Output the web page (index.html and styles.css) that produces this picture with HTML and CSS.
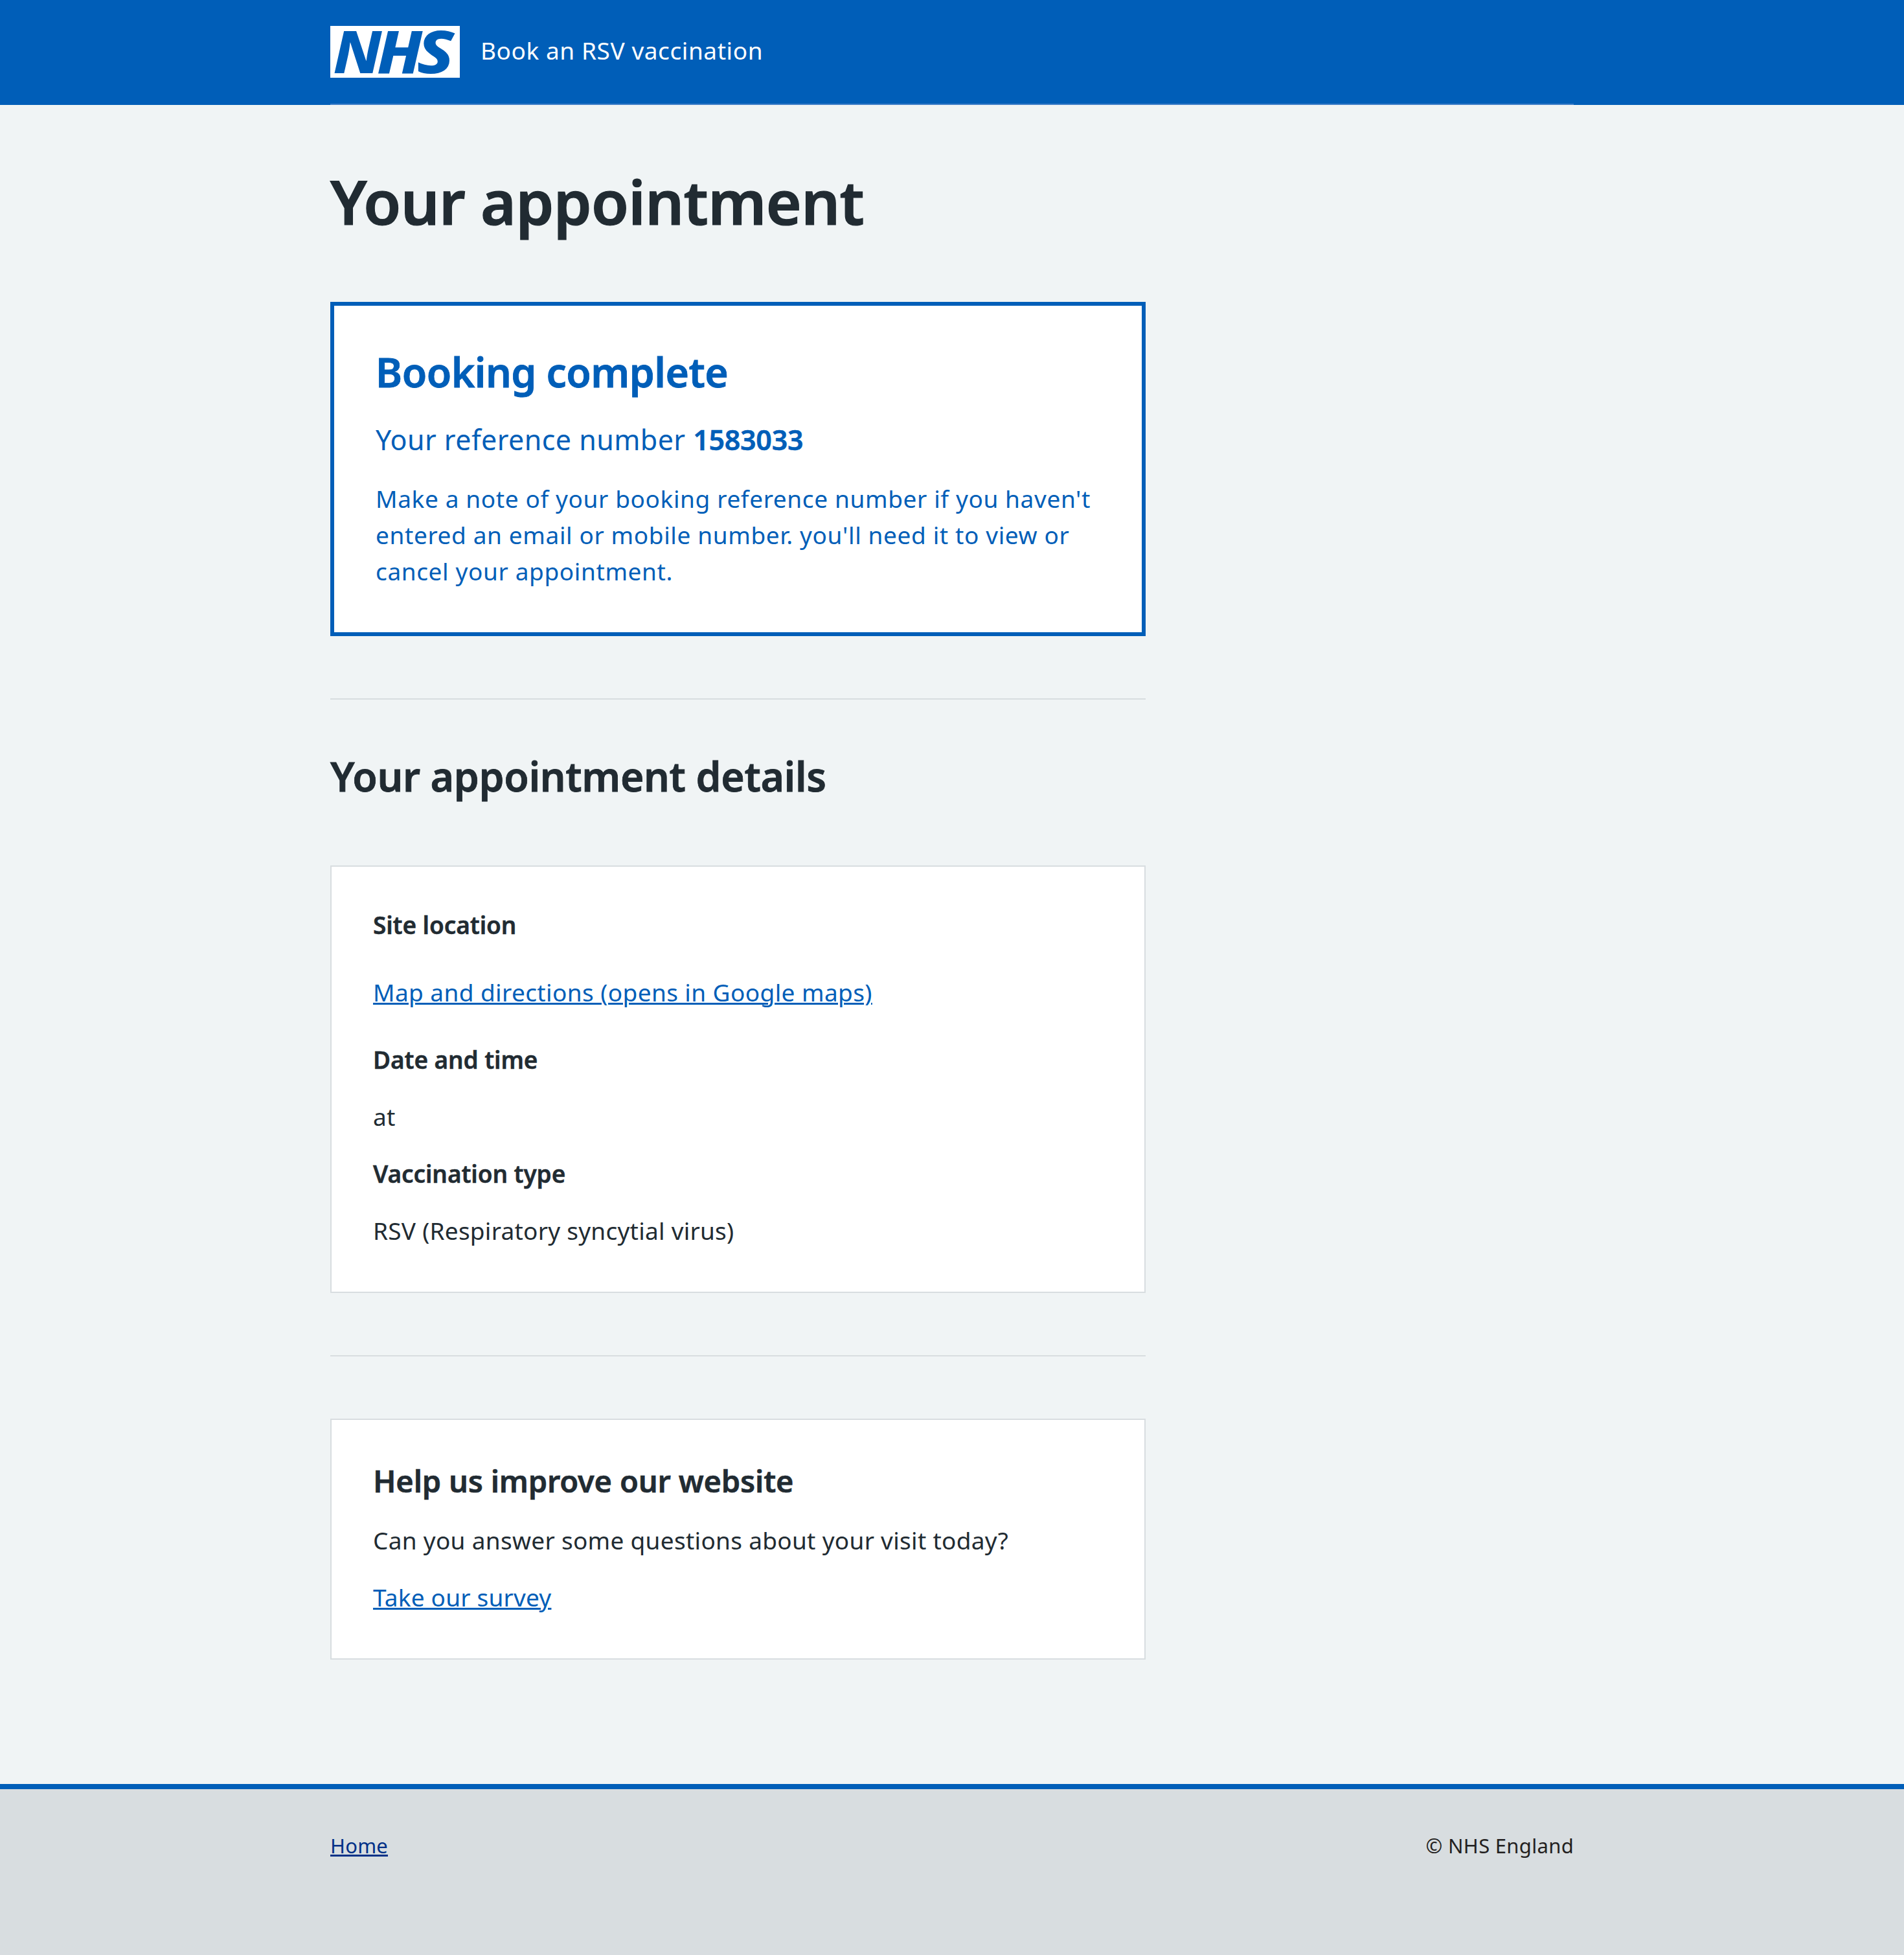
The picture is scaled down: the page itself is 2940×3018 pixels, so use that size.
FILE: index.html
```html
<!DOCTYPE html>
<html lang="en">
<head>
<meta charset="utf-8">
<title>Your appointment - Book an RSV vaccination</title>
<link rel="stylesheet" href="styles.css">
</head>
<body>
<header class="header">
  <div class="container header-inner">
    <svg class="logo" viewBox="0 0 200 80" role="img" aria-label="NHS">
      <rect width="200" height="80" fill="#fff"/>
      <g class="logo-letters">
        <text transform="translate(4.6 72.7) scale(1.06 1)">N</text>
        <text transform="translate(71.9 72.7) scale(1.086 1)">H</text>
        <text transform="translate(133.8 72.7) scale(1.17 1)">S</text>
      </g>
    </svg>
    <span class="service-name">Book an RSV vaccination</span>
  </div>
</header>
<main class="container main">
  <div class="column">
    <h1 class="title">Your appointment</h1>
    <section class="panel">
      <h2 class="panel-title">Booking complete</h2>
      <p class="reference">Your reference number <strong>1583033</strong></p>
      <p class="panel-text">Make a note of your booking reference number if you haven't entered an email or mobile number. you'll need it to view or cancel your appointment.</p>
    </section>
    <hr class="rule">
    <h2 class="subtitle">Your appointment details</h2>
    <section class="card details">
      <h3 class="label">Site location</h3>
      <p class="map"><a class="link" href="#">Map and directions (opens in Google maps)</a></p>
      <h3 class="label">Date and time</h3>
      <p class="value">at</p>
      <h3 class="label">Vaccination type</h3>
      <p class="value">RSV (Respiratory syncytial virus)</p>
    </section>
    <hr class="rule">
    <section class="card survey">
      <h2 class="card-title">Help us improve our website</h2>
      <p class="question">Can you answer some questions about your visit today?</p>
      <p class="survey-link"><a class="link" href="#">Take our survey</a></p>
    </section>
  </div>
</main>
<footer class="footer">
  <div class="container footer-inner">
    <a class="footer-link" href="#">Home</a>
    <span class="copyright">© NHS England</span>
  </div>
</footer>
</body>
</html>
```
FILE: styles.css
```css
* { box-sizing: border-box; }
body {
  margin: 0;
  min-height: 3018px;
  display: flex;
  flex-direction: column;
  background: #f0f4f5;
  color: #212b32;
  font: 400 37px/56px "Noto Sans", "Open Sans", sans-serif;
}
h1, h2, h3, p { margin: 0; }
h1, h2, h3, strong { font-weight: 600; -webkit-text-stroke: 0.013em currentColor; }
.container { width: 1920px; margin: 0 auto; }

.header { background: #005eb8; color: #fff; }
.header-inner {
  display: flex;
  align-items: center;
  gap: 32px;
  height: 162px;
  padding: 40px 0;
  border-bottom: 2px solid #407fc8;
}
.logo { display: block; width: 200px; height: 80px; overflow: visible; }
.logo-letters {
  fill: #005eb8;
  font: italic 800 91.5px "Noto Sans", "Open Sans", sans-serif;
}
.service-name { padding-bottom: 4px; letter-spacing: 0.57px; }

.main { flex: 1; padding-top: 93px; }
.column { width: 1259px; }
.title { font-size: 94px; line-height: 112px; letter-spacing: -0.62px; }

.panel {
  height: 516px;
  margin-top: 99px;
  padding: 64px 70px 0 64px;
  border: 6px solid #005eb8;
  background: #fff;
  color: #005eb8;
}
.panel-title { font-size: 62.5px; line-height: 76px; letter-spacing: -0.56px; }
.reference { margin-top: 35px; font-size: 43px; line-height: 64px; letter-spacing: 0.43px; }
.reference strong { letter-spacing: -0.3px; }
.panel-text { margin-top: 31px; margin-right: -20px; letter-spacing: 0.62px; }

.rule {
  height: 2px;
  margin: 96px 0;
  border: 0;
  background: #d8dde0;
}
.subtitle { margin-top: 80px; font-size: 62.5px; line-height: 76px; letter-spacing: -0.37px; }

.card { padding: 0 64px; border: 2px solid #d8dde0; background: #fff; }
.details { height: 660px; margin-top: 100px; padding-top: 62px; }
.rule + .subtitle { margin-top: -16px; }
.label { font-size: 37px; line-height: 56px; letter-spacing: -0.1px; }
.map { margin: 48px 0; letter-spacing: 0.4px; }
.value { margin: 32px 0; letter-spacing: 0.25px; }
.link {
  color: #005eb8;
  text-decoration-thickness: 3px;
  text-underline-offset: 2px;
}

.survey { height: 372px; padding-top: 60px; }
.card-title { font-size: 47px; line-height: 68px; letter-spacing: -0.2px; }
.question { margin-top: 30px; letter-spacing: 0.29px; }
.survey-link { margin-top: 32px; letter-spacing: 0.2px; }

.footer { height: 264px; border-top: 8px solid #005eb8; background: #d8dde0; }
.footer-inner {
  display: flex;
  justify-content: space-between;
  padding-top: 63px;
  font-size: 31px;
  line-height: 48px;
}
.footer-link {
  color: #003087;
  text-decoration-thickness: 3px;
  text-underline-offset: 2px;
  letter-spacing: 0.2px;
}
.copyright { color: #231f20; letter-spacing: 0.3px; }
```
